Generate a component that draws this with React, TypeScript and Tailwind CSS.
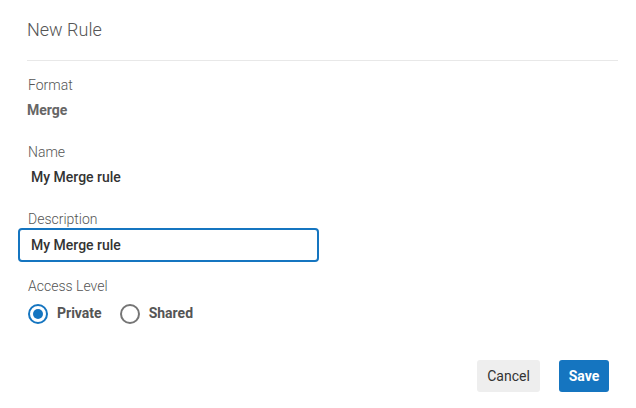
import React, { useState } from 'react';

type Access = 'private' | 'shared';

const Radio: React.FC<{ checked: boolean; label: string; onSelect: () => void }> = ({ checked, label, onSelect }) => (
  <label className="flex items-center cursor-pointer" onClick={onSelect}>
    <span
      className={`w-[20px] h-[20px] rounded-full border-2 flex items-center justify-center ${
        checked ? 'border-[#1575c0]' : 'border-[#757575]'
      }`}
    >
      {checked && <span className="w-[10px] h-[10px] rounded-full bg-[#1575c0]" />}
    </span>
    <span className="ml-[9px] text-[14px] font-bold text-[#555]">{label}</span>
  </label>
);

const App: React.FC = () => {
  const [access, setAccess] = useState<Access>('private');
  const [description, setDescription] = useState('My Merge rule');

  return (
    <div className="w-[636px] h-[408px] bg-white font-['Roboto',sans-serif] flex flex-col">
      <div className="pl-[27px] pr-[18px]">
        <h1 className="pt-[18px] pb-[18px] text-[18px] leading-[24px] font-light text-[#555]">New Rule</h1>
        <div className="h-px bg-[#e8e8e8]" />
      </div>

      <div className="flex flex-col pl-[18px]">
        <span className="mt-[15px] pl-[10px] text-[14px] leading-[18px] font-light text-[#555]">Format</span>
        <span className="mt-[7px] pl-[9px] text-[14px] leading-[18px] font-bold text-[#666]">Merge</span>

        <span className="mt-[24px] pl-[10px] text-[14px] leading-[18px] font-light text-[#555]">Name</span>
        <span className="mt-[7px] pl-[13px] text-[14px] leading-[18px] font-medium text-[#333]">My Merge rule</span>

        <span className="mt-[24px] pl-[10px] text-[14px] leading-[18px] font-light text-[#555]">Description</span>
        <input
          value={description}
          onChange={(e) => setDescription(e.target.value)}
          className="w-[301px] h-[34px] px-[11px] rounded-[4px] border-2 border-[#1575c0] text-[14px] font-medium text-[#333] outline-none"
        />

        <span className="mt-[15px] pl-[10px] text-[14px] leading-[18px] font-light text-[#555]">Access Level</span>
        <div className="mt-[8px] pl-[10px] flex items-center gap-[18px]">
          <Radio checked={access === 'private'} label="Private" onSelect={() => setAccess('private')} />
          <Radio checked={access === 'shared'} label="Shared" onSelect={() => setAccess('shared')} />
        </div>
      </div>

      <div className="mt-auto mb-[16px] pr-[27px] flex justify-end gap-[19px]">
        <button className="w-[63px] h-[32px] rounded-[3px] bg-[#eeeeee] text-[14px] text-[#333]">Cancel</button>
        <button className="w-[50px] h-[32px] rounded-[3px] bg-[#1575c0] text-[14px] font-bold text-white">Save</button>
      </div>
    </div>
  );
};

export default App;
